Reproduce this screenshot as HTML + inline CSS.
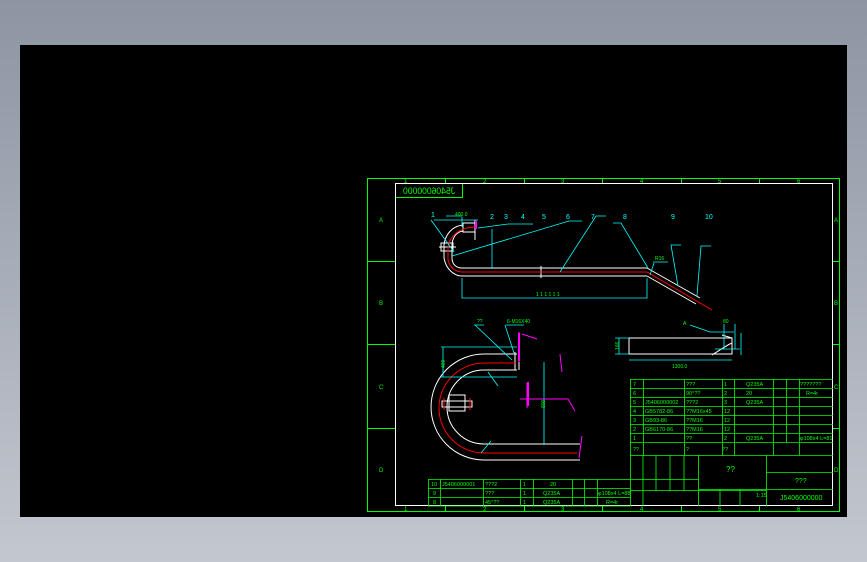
<!DOCTYPE html>
<html><head><meta charset="utf-8"><style>
html,body{margin:0;padding:0;width:867px;height:562px;overflow:hidden;background:linear-gradient(#8d95a3,#c3c7cf);}
svg{position:absolute;left:0;top:0}
text{font-family:"Liberation Sans","Noto Sans CJK SC",sans-serif;fill:#00ff00}
</style></head><body>
<svg width="867" height="562" viewBox="0 0 867 562" style="font-size:6px">
<rect x="20" y="45" width="827" height="472" fill="#000"/>
<g fill="none" stroke="#00ff00" stroke-width="1">
<rect x="367.5" y="178.5" width="472" height="333"/>
<line x1="367" y1="261.5" x2="395" y2="261.5"/><line x1="367" y1="344.5" x2="395" y2="344.5"/><line x1="367" y1="428.5" x2="395" y2="428.5"/>
<line x1="833" y1="261.5" x2="839" y2="261.5"/><line x1="833" y1="344.5" x2="839" y2="344.5"/><line x1="833" y1="428.5" x2="839" y2="428.5"/>
<path d="M445.5 178v5M524.5 178v5M602.5 178v5M681.5 178v5M759.5 178v5M445.5 506v5M524.5 506v5M602.5 506v5M681.5 506v5M759.5 506v5"/>
<rect x="395.5" y="183.5" width="67" height="14"/>
</g>
<g>
<text x="404" y="183">1</text><text x="483" y="183">2</text><text x="561" y="183">3</text><text x="640" y="183">4</text><text x="718" y="183">5</text><text x="797" y="183">6</text>
<text x="404" y="511">1</text><text x="483" y="511">2</text><text x="561" y="511">3</text><text x="640" y="511">4</text><text x="718" y="511">5</text><text x="797" y="511">6</text>
<text x="379" y="222">A</text><text x="379" y="305">B</text><text x="379" y="389">C</text><text x="379" y="472">D</text>
<text x="834" y="222">A</text><text x="834" y="305">B</text><text x="834" y="389">C</text><text x="834" y="472">D</text>
<text x="403" y="194" transform="translate(858,0) scale(-1,1)" style="font-size:9px" textLength="52" lengthAdjust="spacingAndGlyphs">J5406000000</text>
</g>
<rect x="395.5" y="183.5" width="437" height="322" fill="none" stroke="#fff"/>
<g fill="none" stroke="#fff" stroke-width="1">
<path d="M462 268H647M462 276H647M647 268L700 298M647 276L696 304"/>
<path d="M463 223h12v9h-12zM475 220v20"/>
<path d="M463 225C452 226 445 235 444 245V258C446 270 455 276 462 276M463 231C456 232 452 238 452 246V258C452 265 457 268 462 268"/>
<path d="M441 243h12v8h-12zM439 247h17"/>
<path d="M541 266v12"/>
</g>
<path d="M462 272H647L712 310M476 227C460 227 448 236 448 250V260C450 268 456 272 462 272" stroke="#f00" fill="none"/>
<path d="M476 221v8" stroke="#f0f" stroke-width="2"/>
<g stroke="#0ff" fill="none" stroke-width="0.8">
<path d="M462 278v20h185v-20M492 229v40M434 220h44M478 228l30 -4h25M452 256L569 221h13M560 272l36 -56h10M648 268l-27 -45h-8M678 286l-7-41h10M697 296l4-50h10M431 220l23 32M446 216h16M462 217v10"/>
<path d="M653 262h15M650 275l4-12"/>
</g>
<g style="font-size:7px"><text x="431" y="217" fill="#0ff" style="fill:#0ff">1</text><text x="490" y="219" style="fill:#0ff">2</text><text x="504" y="219" style="fill:#0ff">3</text><text x="521" y="219" style="fill:#0ff">4</text><text x="542" y="219" style="fill:#0ff">5</text><text x="566" y="219" style="fill:#0ff">6</text><text x="591" y="219" style="fill:#0ff">7</text><text x="623" y="219" style="fill:#0ff">8</text><text x="671" y="219" style="fill:#0ff">9</text><text x="705" y="219" style="fill:#0ff">10</text></g>
<g style="font-size:5px"><text x="455" y="216">400.0</text><text x="655" y="260">R16</text><text x="536" y="296">1 1 1 1 1 1</text></g>
<g fill="none" stroke="#fff">
<path d="M517 354H484A53 53 0 0 0 484 460H580M517 370H484A37 37 0 0 0 484 444H580"/>
<path d="M449 395h16v16h-16zM442 401h30v6h-30zM515 352v18M519 352v18"/>
</g>
<path d="M516 363H484A45 45 0 0 0 484 453H577" stroke="#f00" fill="none"/>
<path d="M444 398v12M470 398v12" stroke="#f00"/>
<g stroke="#0ff" fill="none" stroke-width="0.8">
<path d="M441 347h76M441 377h76M443 347v30M544 362v83M488 372l10 14M491 441l-10 12M475 325l37 35M505 325l9 28M474 325h10M506 325h18"/>
</g>
<g stroke="#f0f" fill="none"><path d="M519 332v30M527 383v25M520 399h48l7 12M522 334l15 5M560 354l2 18M582 436l-3 22"/><path d="M528 382v24M519 333v28" stroke-width="2"/></g>
<g style="font-size:5px"><text x="437" y="370" transform="rotate(-90 440 365)">400</text><text x="537" y="410" transform="rotate(-90 540 405)">800</text><text x="477" y="323">??</text><text x="507" y="323">6-M16X40</text></g>
<g fill="none" stroke="#fff"><path d="M629 338h103v16h-103z"/><path d="M722 335l10 3M712 355c8-5 15-10 20-12"/></g>
<g stroke="#0ff" fill="none" stroke-width="0.8"><path d="M619 338v16M615 338h14M615 354h14M629 360h103M721 332h13M724 324v25M735 324v25M741 333v22M715 349h25M690 325l20 7h12"/></g>
<g style="font-size:5px"><text x="612" y="349" transform="rotate(-90 616 346)">166</text><text x="672" y="368">1300.0</text><text x="723" y="323">80</text><text x="683" y="325">A</text></g>
<g fill="none" stroke="#00ff00" stroke-width="0.8">
<path d="M630.5 379.5H833M630 388.5H833M630 397.5H833M630 406.5H833M630 415.5H833M630 424.5H833M630 433.5H833M630 442.5H833M630 455.5H833"/>
<path d="M630.5 379v127M643.5 379v76M684.5 379v76M722.5 379v76M734.5 379v76M773.5 379v76M786.5 379v63M799.5 379v76"/>
<path d="M698.5 455v51M766.5 455v51M766 472.5H833M766 489.5H833M630 479.5H698M630 490.5H766M643 455v51M656 455v36M670 455v36M684 455v36M698 489.5H766M720 489v17M740 489v17"/>
<path d="M428.5 479.5H630M428 488.5H630M428 497.5H630M428 506H630M428.5 479v27M440.5 479v27M483.5 479v27M520.5 479v27M533.5 479v27M572.5 479v27M584.5 479v27M597.5 479v27"/>
</g>
<g style="font-size:5.5px">
<text x="633" y="386">7</text><text x="686" y="386">???</text><text x="724" y="386">1</text><text x="746" y="386">Q235A</text><text x="800" y="386">???????</text>
<text x="633" y="395">6</text><text x="686" y="395">90°??</text><text x="724" y="395">2</text><text x="746" y="395">20</text><text x="806" y="395">R=4r</text>
<text x="633" y="404">5</text><text x="645" y="404">J5406000002</text><text x="686" y="404">???2</text><text x="724" y="404">3</text><text x="746" y="404">Q235A</text>
<text x="633" y="413">4</text><text x="645" y="413">GB5782-86</text><text x="686" y="413">??M16x45</text><text x="724" y="413">12</text>
<text x="633" y="422">3</text><text x="645" y="422">GB93-86</text><text x="686" y="422">??M16</text><text x="724" y="422">12</text>
<text x="633" y="431">2</text><text x="645" y="431">GB6170-86</text><text x="686" y="431">??M16</text><text x="724" y="431">12</text>
<text x="633" y="440">1</text><text x="686" y="440">??</text><text x="724" y="440">2</text><text x="746" y="440">Q235A</text><text x="800" y="440">φ108x4 L=81</text>
<text x="633" y="451">??</text><text x="686" y="451">?</text><text x="722" y="451">??</text>
<text x="726" y="472" style="font-size:8px">??</text><text x="795" y="483" style="font-size:7px">???</text><text x="780" y="500" style="font-size:7px">J5406000000</text>
<text x="756" y="497">1:15</text>
<text x="431" y="486">10</text><text x="442" y="486">J5406000001</text><text x="485" y="486">???2</text><text x="523" y="486">1</text><text x="550" y="486">20</text>
<text x="433" y="495">9</text><text x="485" y="495">???</text><text x="523" y="495">1</text><text x="543" y="495">Q235A</text><text x="598" y="495">φ108x4 L=88</text>
<text x="433" y="504">8</text><text x="485" y="504">45°??</text><text x="523" y="504">1</text><text x="543" y="504">Q235A</text><text x="606" y="504">R=4r</text>
</g>
</svg>
</body></html>
